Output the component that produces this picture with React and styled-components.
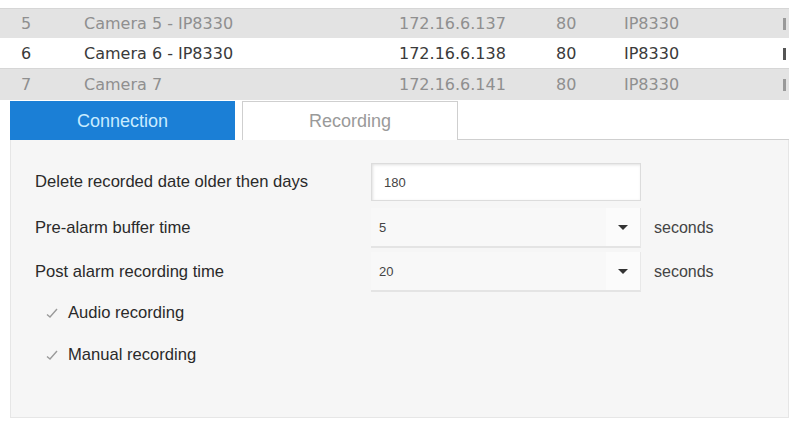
import React from 'react';
import styled, { createGlobalStyle } from 'styled-components';

const GlobalStyle = createGlobalStyle`
  html, body {
    margin: 0;
    padding: 0;
    background: #fff;
  }
`

//page wrapper
const Page = styled.div`
  width: 793px;
  height: 423px;
  padding: 8px 4px 0 10px;
  box-sizing: border-box;
  overflow: hidden;
  font-family: "Liberation Sans", Arial, sans-serif;
`

//camera list
const Table = styled.div`
  display: flex;
  flex-direction: column;
  margin-left: -10px;
`

const Row = styled.div`
  display: grid;
  grid-template-columns: 63px 315px 157px 68px 1fr 6px;
  align-items: center;
  height: ${p => p.h || 29}px;
  padding-left: 21px;
  background: ${p => (p.active ? '#ffffff' : '#e3e3e3')};
  color: ${p => (p.active ? '#3a3a3a' : '#8f8f8f')};
  border-top: 1px solid ${p => (p.active ? '#ffffff' : '#d6d6d6')};
  font-family: "DejaVu Sans", Verdana, sans-serif;
  font-size: 16px;
`

const Cell = styled.div`
  white-space: nowrap;
  overflow: hidden;
`

const Marker = styled.div`
  width: 3px;
  height: 12px;
  background: ${p => (p.active ? '#555' : '#999')};
`

//tabs
const TabStrip = styled.div`
  display: flex;
  align-items: flex-end;
  height: 40px;
`

const Tab = styled.div`
  width: ${p => p.w}px;
  height: 39px;
  display: flex;
  align-items: center;
  justify-content: center;
  box-sizing: border-box;
  font-size: 18px;
  background: ${p => (p.selected ? '#1b7fd6' : '#ffffff')};
  color: ${p => (p.selected ? '#c9ecff' : '#9a9a9a')};
  border: 1px solid ${p => (p.selected ? '#1b7fd6' : '#cfcfcf')};
  border-bottom: none;
  margin-right: ${p => p.gap || 0}px;
`

const TabFill = styled.div`
  flex: 1;
  height: 38px;
  border-bottom: 1px solid #cfcfcf;
  background: #fff;
`

//settings panel
const Panel = styled.div`
  height: 278px;
  background: #f6f6f6;
  border: 1px solid #e6e6e6;
  border-top: none;
  box-sizing: border-box;
  padding: 18px 0 0 24px;
  display: flex;
  flex-direction: column;
`

const FormRow = styled.div`
  display: flex;
  align-items: center;
  height: ${p => p.h || 44}px;
`

const Label = styled.div`
  width: 336px;
  font-size: 16.6px;
  color: #2a2a2a;
`

const TextBox = styled.div`
  width: 270px;
  height: 38px;
  box-sizing: border-box;
  background: #fff;
  border: 1px solid #dcdcdc;
  box-shadow: inset 1px 1px 3px rgba(0, 0, 0, 0.12);
  display: flex;
  align-items: center;
  padding-left: 12px;
  font-size: 13px;
  color: #444;
`

const Select = styled.div`
  width: 270px;
  height: 40px;
  box-sizing: border-box;
  background: #f8f8f8;
  border-bottom: 2px solid #e4e4e4;
  border-right: 1px solid #e8e8e8;
  display: flex;
  align-items: center;
  font-size: 13px;
  color: #444;
`

const SelectValue = styled.div`
  flex: 1;
  padding-left: 8px;
`

const ArrowBox = styled.div`
  width: 34px;
  height: 100%;
  display: flex;
  align-items: center;
  justify-content: center;
  background: #fbfbfb;
`

const Arrow = styled.div`
  width: 0;
  height: 0;
  border-left: 5px solid transparent;
  border-right: 5px solid transparent;
  border-top: 5px solid #333;
`

const Unit = styled.div`
  margin-left: 13px;
  font-size: 16px;
  color: #444;
`

const Check = styled.div`
  display: flex;
  align-items: center;
  height: ${p => p.h || 38}px;
  padding-left: 10px;
  font-size: 16.6px;
  color: #2a2a2a;
`

const CheckMark = styled.svg`
  width: 14px;
  height: 12px;
  margin-right: 9px;
`

const rows = [
  { no: 5, name: 'Camera 5 - IP8330', ip: '172.16.6.137', port: 80, model: 'IP8330' },
  { no: 6, name: 'Camera 6 - IP8330', ip: '172.16.6.138', port: 80, model: 'IP8330', active: true },
  { no: 7, name: 'Camera 7', ip: '172.16.6.141', port: 80, model: 'IP8330', h: 31 },
]

const Tick = () => (
  <CheckMark viewBox="0 0 14 12">
    <path d="M2 7.5 L5 10 L12 2" fill="none" stroke="#9a9a9a" strokeWidth="1.4" />
  </CheckMark>
)

const App = () => {
  return (
    <Page>
      <GlobalStyle />
      <Table>
        {rows.map(r => (
          <Row key={r.no} active={r.active} h={r.h}>
            <Cell>{r.no}</Cell>
            <Cell>{r.name}</Cell>
            <Cell>{r.ip}</Cell>
            <Cell>{r.port}</Cell>
            <Cell>{r.model}</Cell>
            <Marker active={r.active} />
          </Row>
        ))}
      </Table>
      <TabStrip>
        <Tab w={225} gap={7} selected>Connection</Tab>
        <Tab w={216}>Recording</Tab>
        <TabFill />
      </TabStrip>
      <Panel>
        <FormRow h={48}>
          <Label>Delete recorded date older then days</Label>
          <TextBox>180</TextBox>
        </FormRow>
        <FormRow>
          <Label>Pre-alarm buffer time</Label>
          <Select>
            <SelectValue>5</SelectValue>
            <ArrowBox><Arrow /></ArrowBox>
          </Select>
          <Unit>seconds</Unit>
        </FormRow>
        <FormRow>
          <Label>Post alarm recording time</Label>
          <Select>
            <SelectValue>20</SelectValue>
            <ArrowBox><Arrow /></ArrowBox>
          </Select>
          <Unit>seconds</Unit>
        </FormRow>
        <Check><Tick />Audio recording</Check>
        <Check h={46}><Tick />Manual recording</Check>
      </Panel>
    </Page>
  );
}

export default App;
